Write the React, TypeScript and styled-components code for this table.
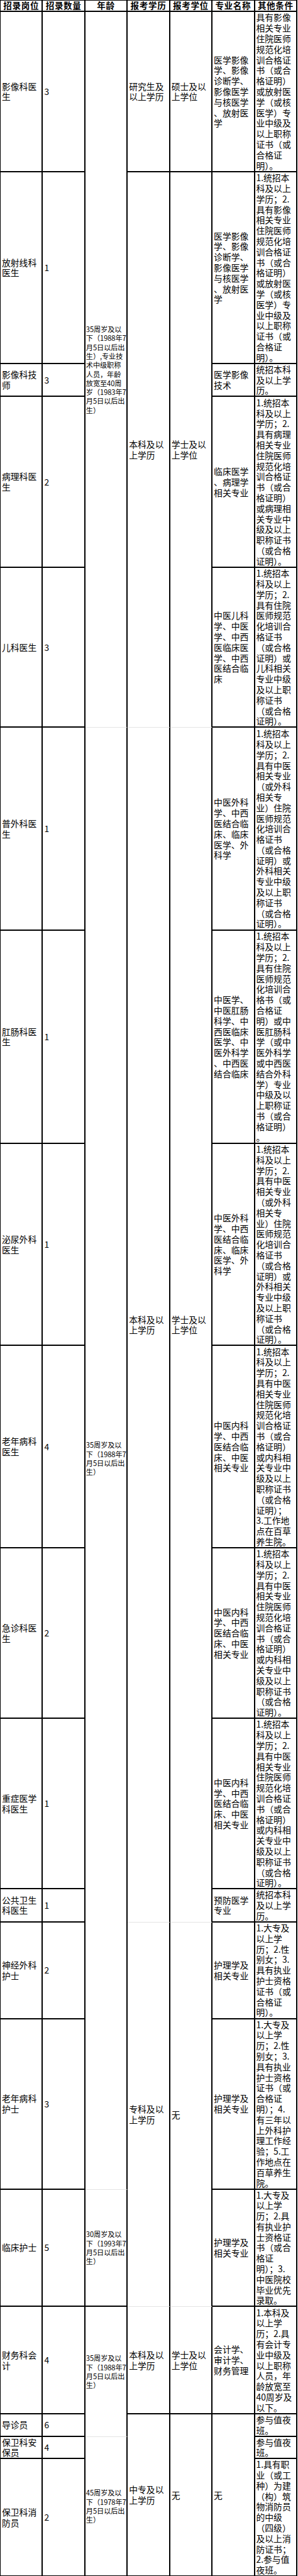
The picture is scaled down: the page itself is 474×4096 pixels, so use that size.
import styled, { createGlobalStyle } from "styled-components";

const GlobalStyle = createGlobalStyle`
  body {
    margin: 0;
    background: #ffffff;
    color: #000000;
    font-family: "Noto Sans CJK SC", "Noto Sans", sans-serif;
  }
`;

const HEADERS = ["招录岗位", "招录数量", "年龄", "报考学历", "报考学位", "专业名称", "其他条件"];

// age texts keep the line breaks of the original sheet
const AGE_WIDE =
  "35周岁及以\n下（1988年7\n月5日以后出\n生）,专业技\n术中级职称\n人员，年龄\n放宽至40周\n岁（1983年7\n月5日以后出\n生）";
const AGE_35 = "35周岁及以\n下（1988年7\n月5日以后出\n生）";
const AGE_30 = "30周岁及以\n下（1993年7\n月5日以后出\n生）";
const AGE_45 = "45周岁及以\n下（1978年7\n月5日以后出\n生）";

const MAJOR_IMG = "医学影像\n学、影像\n诊断学、\n影像医学\n与核医学\n、放射医\n学";
const MAJOR_SURG = "中医外科\n学、中西\n医结合临\n床、临床\n医学、外\n科学";
const MAJOR_INT = "中医内科\n学、中西\n医结合临\n床、中医\n相关专业";
const MAJOR_NURSE = "护理学及\n相关专业";

const OTHER_SURG =
  "1.统招本\n科及以上\n学历；2.\n具有中医\n相关专业\n（或外科\n相关专\n业）住院\n医师规范\n化培训合\n格证书\n（或合格\n证明）或\n外科相关\n专业中级\n及以上职\n称证书\n（或合格\n证明）。";
const OTHER_INT =
  "1.统招本\n科及以上\n学历；2.\n具有中医\n相关专业\n住院医师\n规范化培\n训合格证\n书（或合\n格证明）\n或内科相\n关专业中\n级及以上\n职称证书\n（或合格\n证明）。";

type Span = { text: string; span: number; soft?: boolean };
type Edu = { deg: string; bach: string; span: number; soft?: boolean };

type RowData = {
  h: number;
  post: string;
  num: string;
  age?: Span;
  edu?: Edu;
  major?: Span;
  other: string;
};

const ROWS: RowData[] = [
  {
    h: 255.2,
    post: "影像科医生",
    num: "3",
    age: { text: AGE_WIDE, span: 5, soft: true },
    edu: { deg: "研究生及\n以上学历", bach: "硕士及以\n上学位", span: 1 },
    major: { text: MAJOR_IMG, span: 1 },
    other:
      "具有影像\n相关专业\n住院医师\n规范化培\n训合格证\n书（或合\n格证明）\n或放射医\n学（或核\n医学）专\n业中级及\n以上职称\n证书（或\n合格证\n明）。",
  },
  {
    h: 304.8,
    post: "放射线科医生",
    num: "1",
    edu: { deg: "本科及以\n上学历", bach: "学士及以\n上学位", span: 4, soft: true },
    major: { text: MAJOR_IMG, span: 1 },
    other:
      "1.统招本\n科及以上\n学历；2.\n具有影像\n相关专业\n住院医师\n规范化培\n训合格证\n书（或合\n格证明）\n或放射医\n学（或核\n医学）专\n业中级及\n以上职称\n证书（或\n合格证\n明）。",
  },
  {
    h: 51.6,
    post: "影像科技师",
    num: "3",
    major: { text: "医学影像\n技术", span: 1 },
    other: "统招本科\n及以上学\n历。",
  },
  {
    h: 272,
    post: "病理科医生",
    num: "2",
    major: { text: "临床医学\n、病理学\n相关专业", span: 1 },
    other:
      "1.统招本\n科及以上\n学历；2.\n具有病理\n相关专业\n住院医师\n规范化培\n训合格证\n书（或合\n格证明）\n或病理相\n关专业中\n级及以上\n职称证书\n（或合格\n证明）。",
  },
  {
    h: 254.2,
    post: "儿科医生",
    num: "3",
    major: { text: "中医儿科\n学、中医\n学、中西\n医临床医\n学、中西\n医结合临\n床", span: 1 },
    other:
      "1.统招本\n科及以上\n学历；2.\n具有住院\n医师规范\n化培训合\n格证书\n（或合格\n证明）或\n儿科相关\n专业中级\n及以上职\n称证书\n（或合格\n证明）。",
  },
  {
    h: 322.7,
    post: "普外科医生",
    num: "1",
    age: { text: AGE_35, span: 9, soft: true },
    edu: { deg: "本科及以\n上学历", bach: "学士及以\n上学位", span: 7, soft: true },
    major: { text: MAJOR_SURG, span: 1 },
    other: OTHER_SURG,
  },
  {
    h: 338.7,
    post: "肛肠科医生",
    num: "1",
    major: { text: "中医学、\n中医肛肠\n科学、中\n西医临床\n医学、中\n医外科学\n、中西医\n结合临床", span: 1 },
    other:
      "1.统招本\n科及以上\n学历；2.\n具有住院\n医师规范\n化培训合\n格书（或\n合格证\n明）或中\n医肛肠科\n学（或中\n医外科学\n或中西医\n结合外科\n学）专业\n中级及以\n上职称证\n书（或合\n格证明）\n。",
  },
  {
    h: 321.6,
    post: "泌尿外科医生",
    num: "1",
    major: { text: MAJOR_SURG, span: 1 },
    other: OTHER_SURG,
  },
  {
    h: 321.8,
    post: "老年病科医生",
    num: "4",
    major: { text: MAJOR_INT, span: 1 },
    other:
      "1.统招本\n科及以上\n学历；2.\n具有中医\n相关专业\n住院医师\n规范化培\n训合格证\n书（或合\n格证明）\n或内科相\n关专业中\n级及以上\n职称证书\n（或合格\n证明）；\n3.工作地\n点在百草\n养生院。",
  },
  { h: 271.1, post: "急诊科医生", num: "2", major: { text: MAJOR_INT, span: 1 }, other: OTHER_INT },
  { h: 271, post: "重症医学科医生", num: "1", major: { text: MAJOR_INT, span: 1 }, other: OTHER_INT },
  {
    h: 51.6,
    post: "公共卫生科医生",
    num: "1",
    major: { text: "预防医学\n专业", span: 1 },
    other: "统招本科\n及以上学\n历。",
  },
  {
    h: 153.9,
    post: "神经外科护士",
    num: "2",
    edu: { deg: "专科及以\n上学历", bach: "无", span: 3, soft: true },
    major: { text: MAJOR_NURSE, span: 1 },
    other: "1.大专及\n以上学\n历；2.性\n别女；3.\n具有执业\n护士资格\n证书（或\n合格证\n明）。",
  },
  {
    h: 271,
    post: "老年病科护士",
    num: "3",
    major: { text: MAJOR_NURSE, span: 1 },
    other:
      "1.大专及\n以上学\n历；2.性\n别女；3.\n具有执业\n护士资格\n证书（或\n合格证\n明）；4.\n有三年以\n上外科护\n理工作经\n验；5.工\n作地点在\n百草养生\n院。",
  },
  {
    h: 186.7,
    post: "临床护士",
    num: "5",
    age: { text: AGE_30, span: 1 },
    major: { text: MAJOR_NURSE, span: 1 },
    other: "1.大专及\n以上学\n历；2.具\n有执业护\n士资格证\n书（或合\n格证\n明）；3.\n中医院校\n毕业优先\n录取。",
  },
  {
    h: 170.7,
    post: "财务科会计",
    num: "4",
    age: { text: AGE_35, span: 2, soft: true },
    edu: { deg: "本科及以\n上学历", bach: "学士及以\n上学位", span: 1 },
    major: { text: "会计学、\n审计学、\n财务管理", span: 1 },
    other: "1.本科及\n以上学\n历；2.具\n有会计专\n业中级及\n以上职称\n人员，年\n龄放宽至\n40周岁及\n以下。",
  },
  {
    h: 35.7,
    post: "导诊员",
    num: "6",
    edu: { deg: "中专及以\n上学历", bach: "无", span: 3 },
    major: { text: "无", span: 3 },
    other: "参与值夜\n班。",
  },
  {
    h: 34.7,
    post: "保卫科安保员",
    num: "4",
    age: { text: AGE_45, span: 2 },
    other: "参与值夜\n班。",
  },
  {
    h: 186.6,
    post: "保卫科消防员",
    num: "2",
    other:
      "1.具有职\n业（或工\n种）为建\n（构）筑\n物消防员\n的中级\n（四级）\n及以上消\n防证书；\n2.参与值\n夜班。",
  },
];

export default function App() {
  return (
    <>
      <GlobalStyle />
      <Sheet>
        <colgroup>
          {HEADERS.map((h) => (
            <Column key={h} />
          ))}
        </colgroup>
        <thead>
          <HeadRow>
            {HEADERS.map((h) => (
              <HeadCell key={h}>{h}</HeadCell>
            ))}
          </HeadRow>
        </thead>
        <tbody>
          {ROWS.map((row) => (
            <BodyRow key={row.post} $h={row.h}>
              <Cell>{row.post}</Cell>
              <Cell>{row.num}</Cell>
              {row.age && (
                <AgeCell rowSpan={row.age.span} $soft={row.age.soft}>
                  {row.age.text}
                </AgeCell>
              )}
              {row.edu && (
                <>
                  <Cell rowSpan={row.edu.span} $soft={row.edu.soft}>
                    {row.edu.deg}
                  </Cell>
                  <Cell rowSpan={row.edu.span} $soft={row.edu.soft}>
                    {row.edu.bach}
                  </Cell>
                </>
              )}
              {row.major && <Cell rowSpan={row.major.span}>{row.major.text}</Cell>}
              <Cell>{row.other}</Cell>
            </BodyRow>
          ))}
        </tbody>
      </Sheet>
    </>
  );
}

const Sheet = styled.table`
  width: 474px;
  margin: -1px 0 0 -1px;
  border-collapse: separate;
  border-spacing: 0;
  table-layout: fixed;
  border-left: 2px solid #000;
  border-top: 2px solid #000;
  font-family: "Noto Sans CJK SC", "Noto Sans", sans-serif;
  background: #ffffff;
`;

const Column = styled.col`
  width: calc(100% / 7);
`;

const HeadRow = styled.tr`
  height: 17.8px;
`;

const HeadCell = styled.th`
  border-right: 2px solid #000;
  border-bottom: 2px solid #000;
  padding: 0;
  text-align: center;
  vertical-align: middle;
  font-size: 13.6px;
  font-weight: 700;
  line-height: 15.8px;
  letter-spacing: 0.6px;
  white-space: nowrap;
`;

const BodyRow = styled.tr<{ $h: number }>`
  height: ${(p) => p.$h}px;
`;

const Cell = styled.td<{ $soft?: boolean }>`
  border-right: 2px solid #000;
  border-bottom: ${(p) => (p.$soft ? "1px solid #e4e4e4" : "2px solid #000")};
  padding: 0 1px 0 2px;
  text-align: left;
  vertical-align: middle;
  font-size: 13.8px;
  line-height: 16.8px;
  white-space: pre-line;
  word-break: break-all;
`;

const AgeCell = styled(Cell)`
  padding: 0 0 0 1px;
  font-size: 11.2px;
  line-height: 14.3px;
  letter-spacing: -0.1px;
  white-space: pre;
  overflow: hidden;
`;
